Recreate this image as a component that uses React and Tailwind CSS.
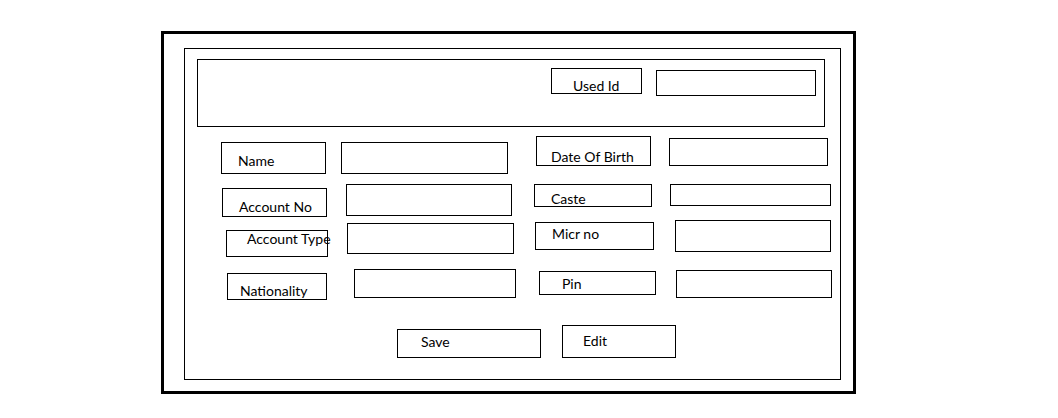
import React from "react";

function Box({ className = "", children }) {
  return (
    <div className={"shrink-0 border border-black text-[14px] leading-[16px] whitespace-nowrap text-black " + className}>
      {children}
    </div>
  );
}

export default function App() {
  return (
    <div className="w-[1058px] h-[418px] bg-white overflow-hidden" style={{ fontFamily: "Lato, 'Open Sans', sans-serif" }}>
      <div className="ml-[161px] mt-[31px] w-[695px] h-[363px] border-[3px] border-black pt-[14px] pl-[20px]">
        <div className="w-[657px] h-[332px] border border-black">
          {/* header */}
          <div className="ml-[12px] mt-[10px] w-[628px] h-[68px] border border-black flex items-start">
            <Box className="ml-[353px] mt-[8px] w-[91px] h-[26px] pl-[21px] pt-[9px]">Used Id</Box>
            <Box className="ml-[14px] mt-[10px] w-[160px] h-[26px]" />
          </div>

          <div className="mt-[9px]">
            {/* row 1 */}
            <div className="flex items-start h-[48px]">
              <Box className="ml-[36px] mt-[6px] w-[105px] h-[32px] pl-[16px] pt-[10px]">Name</Box>
              <Box className="ml-[15px] mt-[6px] w-[167px] h-[32px]" />
              <Box className="ml-[28px] mt-[0px] w-[115px] h-[30px] pl-[14px] pt-[12px]">Date Of Birth</Box>
              <Box className="ml-[18px] mt-[2px] w-[159px] h-[28px]" />
            </div>
            {/* row 2 */}
            <div className="flex items-start h-[36px]">
              <Box className="ml-[37px] mt-[4px] w-[105px] h-[29px] pl-[16px] pt-[10px]">Account No</Box>
              <Box className="ml-[19px] mt-[0px] w-[166px] h-[32px]" />
              <Box className="ml-[22px] mt-[0px] w-[118px] h-[23px] pl-[16px] pt-[6px]">Caste</Box>
              <Box className="ml-[18px] mt-[0px] w-[161px] h-[22px]" />
            </div>
            {/* row 3 */}
            <div className="flex items-start h-[49px]">
              <Box className="ml-[41px] mt-[10px] w-[102px] h-[27px] pl-[20px] pt-[0px]">Account Type</Box>
              <Box className="ml-[19px] mt-[3px] w-[167px] h-[31px]" />
              <Box className="ml-[21px] mt-[2px] w-[119px] h-[28px] pl-[16px] pt-[3px]">Micr no</Box>
              <Box className="ml-[21px] mt-[0px] w-[156px] h-[32px]" />
            </div>
            {/* row 4 */}
            <div className="flex items-start h-[56px]">
              <Box className="ml-[42px] mt-[4px] w-[100px] h-[27px] pl-[12px] pt-[9px]">Nationality</Box>
              <Box className="ml-[27px] mt-[0px] w-[162px] h-[29px]" />
              <Box className="ml-[23px] mt-[2px] w-[117px] h-[24px] pl-[22px] pt-[4px]">Pin</Box>
              <Box className="ml-[20px] mt-[1px] w-[156px] h-[28px]" />
            </div>
            {/* buttons */}
            <div className="flex items-start h-[33px]">
              <Box className="ml-[212px] mt-[4px] w-[144px] h-[29px] pl-[23px] pt-[4px]">Save</Box>
              <Box className="ml-[21px] mt-[0px] w-[114px] h-[33px] pl-[20px] pt-[7px]">Edit</Box>
            </div>
          </div>
        </div>
      </div>
    </div>
  );
}
